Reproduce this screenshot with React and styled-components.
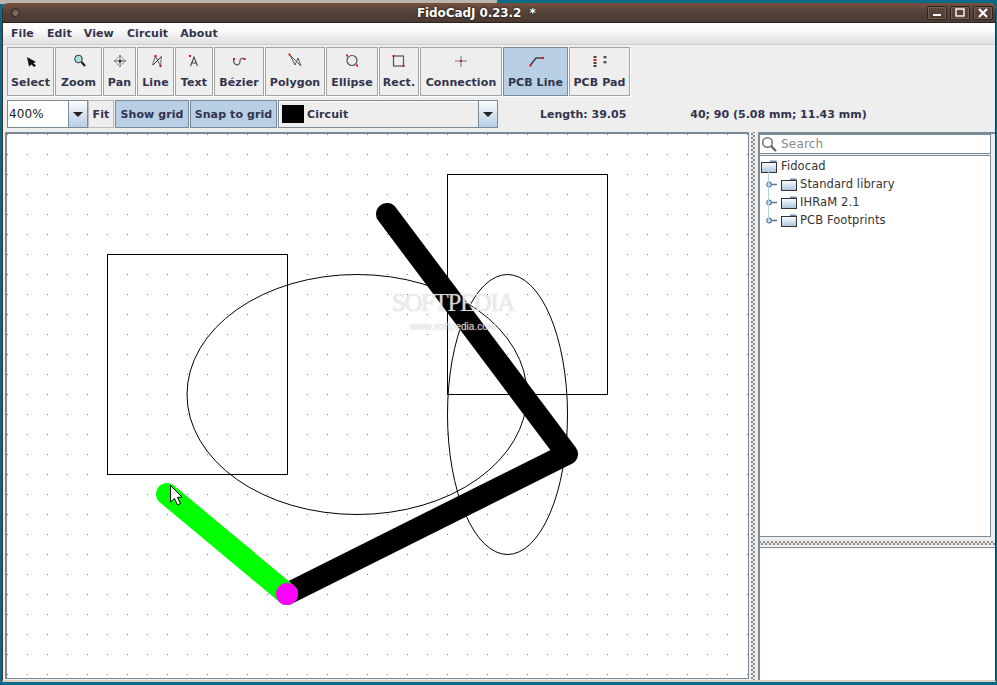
import React from "react";
import styled, { createGlobalStyle } from "styled-components";

const Global = createGlobalStyle`
  html, body { margin: 0; padding: 0; background: #0b6a88; }
  * { box-sizing: border-box; }
`;
const Desktop = styled.div`
  width: 997px; height: 685px; overflow: hidden; padding: 3px 1px 3px 2px;
  background: linear-gradient(90deg, #bdb6ae 0 497px, #0b6a88 497px) top / 100% 4px no-repeat, #0b6a88;
  font-family: "DejaVu Sans", sans-serif;
`;
const Win = styled.div`
  width: 100%; height: 100%; display: flex; flex-direction: column; background: #eee;
  border-radius: 6px 6px 0 0; overflow: hidden;
  border-left: 1px solid #3d3029; border-right: 1px solid #3d3029; border-bottom: 2px solid #d8cfc2;
`;
const TitleBar = styled.div`
  height: 20px; flex: none; display: flex; align-items: center; justify-content: space-between;
  padding: 0 2px 0 8px; position: relative;
  background: linear-gradient(#75513f, #55423a 45%, #4b3a32);
  border-bottom: 1px solid #2e241f;
`;
const TitleDot = styled.span`
  width: 9px; height: 9px; border-radius: 50%; border: 1px solid #2f2621;
  background: radial-gradient(circle at 50% 70%, #8a7a70, #4d3e36);
`;
const TitleText = styled.span`
  position: absolute; left: 414px; top: 3px; color: #fff; font: 700 12px "DejaVu Sans", sans-serif;
  white-space: pre; text-shadow: 0 0 2px #000; letter-spacing: -0.1px;
`;
const WinButtons = styled.div` display: flex; gap: 3px; `;
const WinButton = styled.span`
  width: 20px; height: 14px; display: flex; align-items: center; justify-content: center;
  border: 1px solid #2e241f; border-radius: 2px; background: linear-gradient(#63493c, #4c3b33);
  box-shadow: inset 0 0 0 1px #75635a;
`;
const MenuBar = styled.div`
  height: 22px; flex: none; display: flex; align-items: center; padding: 0 0 0 8px;
  background: linear-gradient(#fff, #fafafa 35%, #dfdfdf);
  border-bottom: 1px solid #cfcfcf;
`;
const MenuItem = styled.span`
  font-size: 11px; font-weight: 700; color: #33334d; margin-right: ${p => p.$gap}px; letter-spacing: .1px;
`;
const ToolRow = styled.div`
  height: 53px; flex: none; display: flex; gap: 1px; padding: 2px 0 0 4px; background: #eee;
`;
const ToolButton = styled.div`
  width: ${p => p.$w}px; height: 49px; display: flex; flex-direction: column; align-items: center;
  justify-content: space-between; padding: 5px 0 5px;
  background: ${p => (p.$on ? "#b8cfe5" : "#eeeeee")};
  border: 1px solid ${p => (p.$on ? "#7a8a99" : "#a3a3a3")};
  box-shadow: 1px 1px 0 #fff;
  font-size: 11px; font-weight: 700; color: #33334d; letter-spacing: .1px; line-height: 14px;
`;
const OptionRow = styled.div`
  height: 32px; flex: none; display: flex; align-items: center; padding: 0 0 0 4px; background: #eee;
  font-size: 11px; font-weight: 700; color: #33334d;
`;
const Combo = styled.div`
  width: ${p => p.$w}px; height: 28px; flex: none; display: flex; border: 1px solid #7a8a99;
  margin-left: ${p => p.$ml || 0}px;
  background: ${p => (p.$plain ? "#eee" : "#fff")};
  box-shadow: inset 1px 1px 0 #fff;
`;
const ComboValue = styled.div`
  flex: 1; display: flex; align-items: center; gap: 3px; padding-left: ${p => (p.$swatch ? 3 : 1)}px;
  font-size: ${p => (p.$swatch ? 11 : 12)}px; font-weight: ${p => (p.$swatch ? 700 : 400)};
  color: ${p => (p.$swatch ? "#33334d" : "#222")}; letter-spacing: .1px;
`;
const Swatch = styled.span` width: 22px; height: 18px; background: #000; `;
const ComboArrow = styled.div`
  width: 19px; flex: none; display: flex; align-items: center; justify-content: center;
  border-left: 1px solid #7a8a99; background: linear-gradient(#fff, #dbe6f1 45%, #b8cfe5);
  &::after { content: ""; border-left: 5px solid transparent; border-right: 5px solid transparent; border-top: 5px solid #222; }
`;
const FlatButton = styled.div`
  width: ${p => p.$w}px; height: 28px; flex: none; margin-left: ${p => p.$ml || 0}px;
  display: flex; align-items: center; justify-content: center;
  background: ${p => (p.$on ? "#b8cfe5" : "#eee")}; border: 1px solid ${p => (p.$on ? "#7a8a99" : "#bbb")};
  letter-spacing: .1px;
`;
const Status = styled.span` margin-left: ${p => p.$ml}px; white-space: nowrap; font-size: 11px; `;
const Main = styled.div`
  flex: 1; min-height: 0; display: flex; padding: 2px 0 0 2px; background: #eee;
`;
const CanvasPane = styled.div`
  width: 744px; flex: none; height: 547px; position: relative; background: #fff;
  border-style: solid; border-color: #7a8a99; border-width: 2px 1px 1px 2px;
  svg { display: block; }
`;
const Watermark = styled.div`
  position: absolute; left: 351px; top: 156px; width: 190px; text-align: center; pointer-events: none;
  color: rgba(255,255,255,.7); text-shadow: 0 0 1px rgba(170,170,170,.8);
  font-family: "Liberation Serif", serif; line-height: 1;
`;
const MarkBig = styled.div` font-size: 25px; letter-spacing: -1.4px; `;
const MarkSmall = styled.div` font-size: 10px; font-family: "Liberation Sans", sans-serif; margin-top: 7px; `;
const VDivider = styled.div`
  width: 9px; flex: none; background-color: #eee;
  background-image:
    radial-gradient(circle, #888 0.7px, transparent 1px),
    radial-gradient(circle, #888 0.7px, transparent 1px);
  background-size: 4px 4px; background-position: 1px 0, 3px 2px; background-repeat: repeat-y;
`;
const Side = styled.div`
  flex: 1; min-width: 0; display: flex; flex-direction: column; height: 100%;
  border-left: 2px solid #7a8a99; border-top: 2px solid #7a8a99; background: #eee;
`;
const SearchBox = styled.div`
  height: 20px; width: 231px; flex: none; display: flex; align-items: center; gap: 3px; background: #fff; padding-left: 1px;
  border-right: 1px solid #7a8a99; border-bottom: 1px solid #7a8a99;
  font-size: 12px; color: #8a8a8a; letter-spacing: .2px; border-top: 1px solid #7a8a99;
`;
const Tree = styled.div`
  margin-top: 1px; width: 231px; height: 382px; flex: none; background: #fff; position: relative;
  border: 1px solid #7a8a99; border-left: 0; padding-top: 1px; font-size: 11.5px; color: #333;
`;
const TreeRow = styled.div`
  height: 18px; display: flex; align-items: center; gap: ${p => p.$gap}px; padding-left: ${p => p.$in}px; white-space: nowrap; letter-spacing: .1px;
`;
const HDivider = styled.div`
  height: 11px; flex: none; background-color: #eee; border-bottom: 1px solid #7a8a99;
  background-image:
    radial-gradient(circle, #888 0.7px, transparent 1px),
    radial-gradient(circle, #888 0.7px, transparent 1px);
  background-size: 4px 4px; background-position: 2px 3px, 4px 5px; background-repeat: repeat-x;
`;
const Lower = styled.div` flex: 1; background: #fff; `;

const Ic = ({ children }) => (
  <svg width="20" height="18" viewBox="0 0 20 18" fill="none">{children}</svg>
);
const Red = ({ x, y }) => <rect x={x - 1} y={y - 1} width="2" height="2" fill="#e01010" />;

const icons = {
  select: <Ic><path d="M6 4 L15 9 L12.3 10 L15 12.5 L13 14 L10.5 11.5 L8 13.5 Z" fill="#111" /></Ic>,
  zoom: <Ic><circle cx="9.5" cy="6" r="3.8" fill="#a5e0e0" stroke="#333" /><path d="M12.5 9 L16 13" stroke="#222" strokeWidth="2.2" /></Ic>,
  pan: <Ic><circle cx="10" cy="8" r="4" stroke="#555" strokeDasharray="1.5 1" /><path d="M10 2V14M4 8H16" stroke="#333" strokeDasharray="2 1.5" /><rect x="9" y="7" width="2" height="2" fill="#222" /></Ic>,
  line: <Ic><path d="M6.5 12 L9.5 3 L14.5 13 L15.5 3" stroke="#777" strokeWidth="1.1" /><path d="M7 12L15 4" stroke="#333" /><Red x={9.5} y={3} /><Red x={14.5} y={13} /></Ic>,
  text: <Ic><path d="M6.5 13 L10 4 L13.5 13 M7.7 10H12.3" stroke="#444" strokeWidth="1.1" /><Red x={6} y={3} /></Ic>,
  bezier: <Ic><path d="M4.5 6 C4.5 13 11 14 11 8 C11 5 13 5 16 6" stroke="#555" strokeWidth="1.2" /><Red x={5} y={6} /><Red x={15.5} y={6} /></Ic>,
  polygon: <Ic><path d="M5 2 L16 13 L13 5 L10 12 Z" stroke="#555" strokeWidth="1" /><Red x={4.5} y={1.5} /></Ic>,
  ellipse: <Ic><circle cx="10" cy="7.5" r="5" stroke="#555" strokeWidth="1.2" /><Red x={5} y={2.5} /><Red x={15} y={12.5} /></Ic>,
  rect: <Ic><rect x="4.5" y="3" width="10" height="10" stroke="#555" strokeWidth="1.2" /><Red x={4.5} y={3} /><Red x={14.5} y={13} /></Ic>,
  conn: <Ic><path d="M10 3V14M4 8H16" stroke="#777" /><rect x="9" y="7" width="2" height="2" fill="#e01010" /></Ic>,
  pcbline: <Ic><path d="M4.5 12 L10 5 H17" stroke="#444" strokeWidth="1.5" /><Red x={4.5} y={12.5} /><Red x={17} y={5} /></Ic>,
  pcbpad: <Ic>{[4, 7, 10, 13].map(y => <rect key={y} x="3.5" y={y - 1} width="3" height="2" fill={y === 7 ? "#c22" : "#444"} />)}{[4, 9].map(y => <rect key={y} x="13.5" y={y - 1} width="3" height="2.4" fill="#555" />)}</Ic>,
};

const tools = [
  ["Select", 47, "select"], ["Zoom", 47, "zoom"], ["Pan", 33, "pan"], ["Line", 37, "line"],
  ["Text", 38, "text"], ["Bézier", 50, "bezier"], ["Polygon", 60, "polygon"], ["Ellipse", 52, "ellipse"],
  ["Rect.", 40, "rect"], ["Connection", 82, "conn"], ["PCB Line", 65, "pcbline", true], ["PCB Pad", 61, "pcbpad"],
];

const Folder = () => (
  <svg width="16" height="13" viewBox="0 0 16 13" fill="none">
    <defs>
      <linearGradient id="fg" x1="0" y1="0" x2="0" y2="1"><stop offset="0" stopColor="#fff" /><stop offset="1" stopColor="#a8c2dc" /></linearGradient>
    </defs>
    <path d="M9 .5H15.5V3H9Z" fill="#6d8cb5" />
    <rect x=".5" y="2.5" width="15" height="10" fill="url(#fg)" stroke="#333" />
  </svg>
);
const Handle = () => (
  <svg width="13" height="9" viewBox="0 0 13 9" fill="none">
    <path d="M4 4.5H12" stroke="#4f78a8" strokeWidth="1.3" />
    <circle cx="4" cy="4.5" r="2.3" fill="#dce7f2" stroke="#4f78a8" strokeWidth="1.2" />
  </svg>
);
const TreeLine = styled.span`
  position: absolute; left: 8px; top: 16px; width: 1px; height: 48px; background: #b8cfe5;
`;

const DrawingArea = () => (
  <svg width="741" height="544" viewBox="7 134 741 544" fill="none">
    <defs>
      <pattern id="grid" x="7" y="134" width="20" height="20" patternUnits="userSpaceOnUse">
        <rect width="1" height="1" fill="#777" />
      </pattern>
    </defs>
    <rect x="7" y="134" width="741" height="544" fill="url(#grid)" />
    <g stroke="#000" strokeWidth="1">
      <rect x="107.5" y="254.5" width="180" height="220" />
      <rect x="447.5" y="174.5" width="160" height="220" />
      <ellipse cx="357" cy="394.5" rx="170" ry="120" />
      <ellipse cx="507.5" cy="414.5" rx="60" ry="140" />
    </g>
    <path d="M387 214 L567 454 L287 594" stroke="#000" strokeWidth="22" strokeLinecap="round" strokeLinejoin="round" />
    <path d="M167 494 L287 594" stroke="#00ff00" strokeWidth="22" strokeLinecap="round" />
    <circle cx="287" cy="594" r="11" fill="#ff00ff" />
    <path d="M170.5 485.5 V502 L174.5 498.5 L177.5 505 L180.5 503.5 L177.5 497.5 L182 497 Z" fill="#fff" stroke="#000" />
  </svg>
);

export default function App() {
  return (
    <Desktop>
      <Global />
      <Win>
        <TitleBar>
          <TitleDot />
          <TitleText>FidoCadJ 0.23.2  *</TitleText>
          <WinButtons>
            <WinButton><svg width="10" height="8"><rect x="1" y="5" width="8" height="2" fill="#fff" /></svg></WinButton>
            <WinButton><svg width="10" height="9"><rect x="1" y="1" width="8" height="7" stroke="#fff" strokeWidth="1.4" fill="none" /></svg></WinButton>
            <WinButton><svg width="10" height="10"><path d="M1 1L9 9M9 1L1 9" stroke="#fff" strokeWidth="2.2" /></svg></WinButton>
          </WinButtons>
        </TitleBar>
        <MenuBar>
          <MenuItem $gap={13}>File</MenuItem>
          <MenuItem $gap={12}>Edit</MenuItem>
          <MenuItem $gap={13}>View</MenuItem>
          <MenuItem $gap={12}>Circuit</MenuItem>
          <MenuItem $gap={0}>About</MenuItem>
        </MenuBar>
        <ToolRow>
          {tools.map(([label, w, ic, on]) => (
            <ToolButton key={label} $w={w} $on={on}>
              {icons[ic]}
              <span>{label}</span>
            </ToolButton>
          ))}
        </ToolRow>
        <OptionRow>
          <Combo $w={81}>
            <ComboValue>400%</ComboValue>
            <ComboArrow />
          </Combo>
          <FlatButton $w={26}>Fit</FlatButton>
          <FlatButton $w={74} $on $ml={1}>Show grid</FlatButton>
          <FlatButton $w={87} $on $ml={1}>Snap to grid</FlatButton>
          <Combo $w={220} $plain $ml={1}>
            <ComboValue $swatch><Swatch />Circuit</ComboValue>
            <ComboArrow />
          </Combo>
          <Status $ml={42}>Length: 39.05</Status>
          <Status $ml={64}>40; 90 (5.08 mm; 11.43 mm)</Status>
        </OptionRow>
        <Main>
          <CanvasPane>
            <DrawingArea />
            <Watermark>
              <MarkBig>SOFTPEDIA</MarkBig>
              <MarkSmall>www.softpedia.com</MarkSmall>
            </Watermark>
          </CanvasPane>
          <VDivider />
          <Side>
            <SearchBox>
              <svg width="17" height="16" viewBox="0 0 17 16" fill="none">
                <circle cx="6.5" cy="6.5" r="4.8" stroke="#777" strokeWidth="1.6" />
                <path d="M10 10L15 15" stroke="#666" strokeWidth="2.4" />
              </svg>
              Search
            </SearchBox>
            <Tree>
              <TreeLine />
              <TreeRow $in={1} $gap={4}><Folder />Fidocad</TreeRow>
              <TreeRow $in={5} $gap={3}><Handle /><Folder />Standard library</TreeRow>
              <TreeRow $in={5} $gap={3}><Handle /><Folder />IHRaM 2.1</TreeRow>
              <TreeRow $in={5} $gap={3}><Handle /><Folder />PCB Footprints</TreeRow>
            </Tree>
            <HDivider />
            <Lower />
          </Side>
        </Main>
      </Win>
    </Desktop>
  );
}
